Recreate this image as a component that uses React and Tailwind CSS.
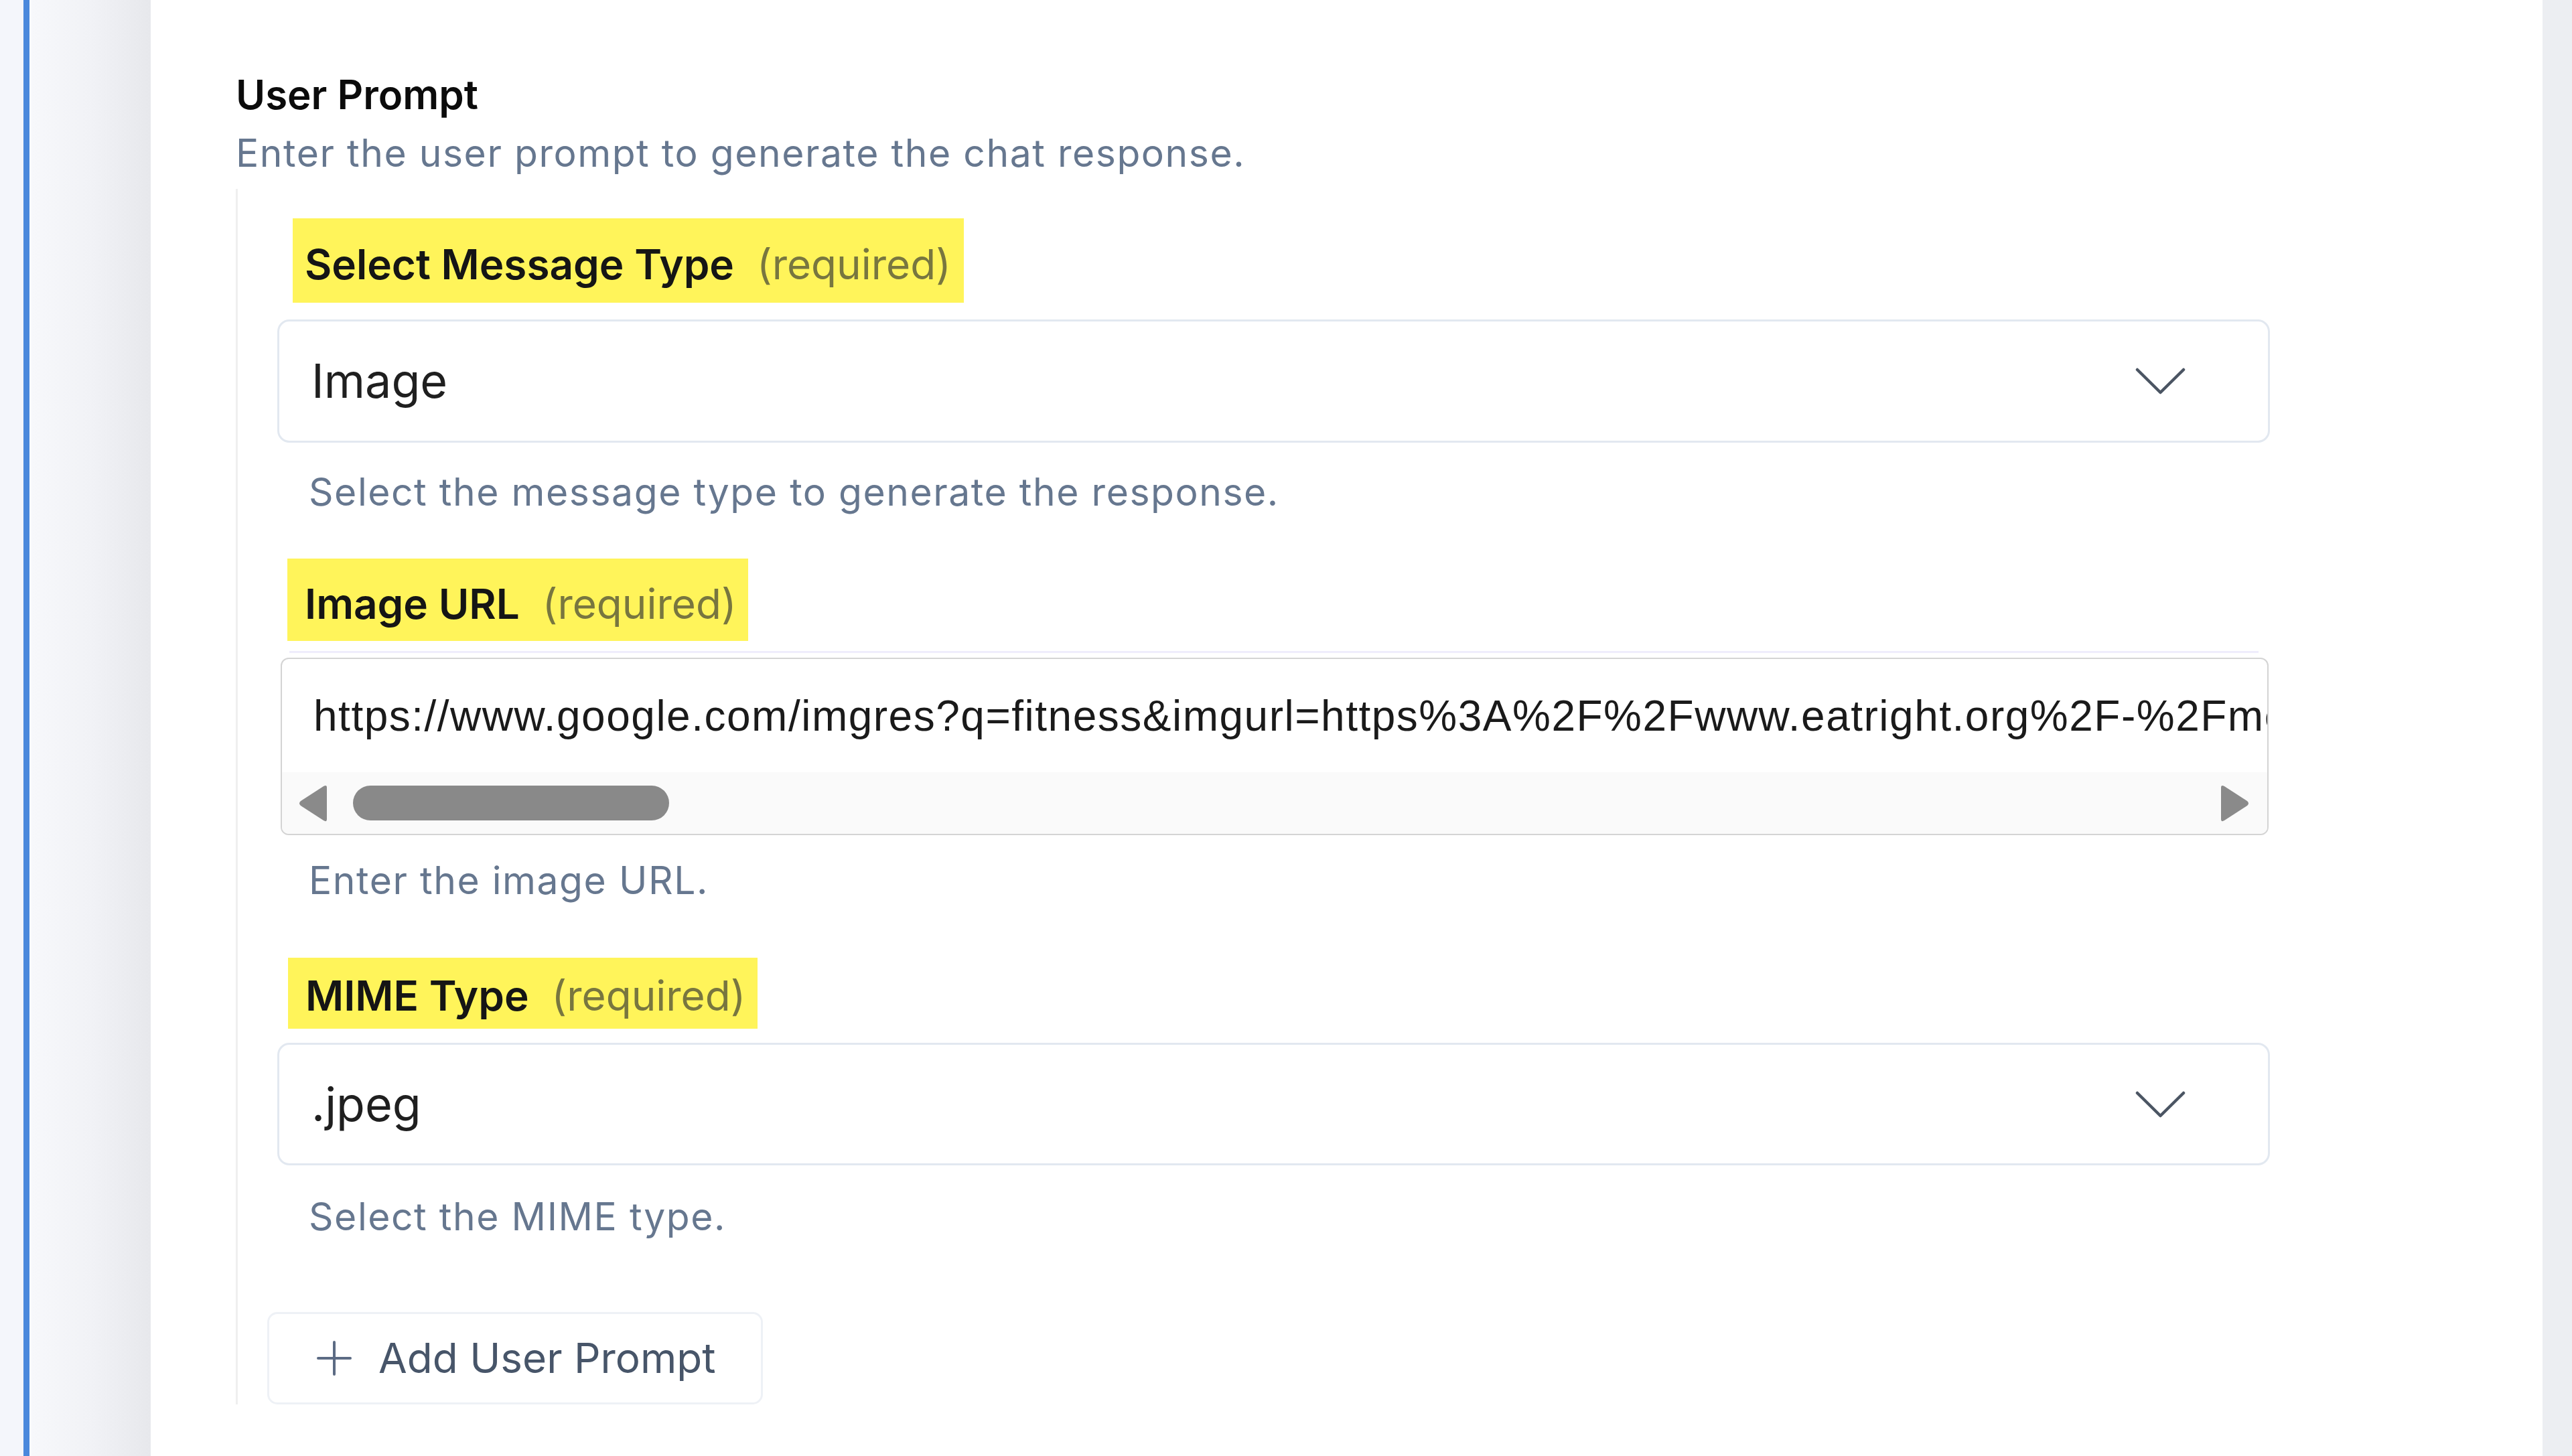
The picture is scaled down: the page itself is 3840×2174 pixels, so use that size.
import React from "react";

function Chevron() {
    return (
        <svg className="w-[75px] h-[40px]" viewBox="0 0 75 40" fill="none">
            <polyline
                points="3,3 37.5,37 72,3"
                stroke="#4b5563"
                strokeWidth="4.5"
                strokeLinecap="round"
                strokeLinejoin="round"
            />
        </svg>
    );
}

function Label({ text, className }) {
    return (
        <div className={`flex w-fit items-center bg-[#fff45a] ${className}`}>
            <span className="text-[62px] leading-none font-semibold text-[#151515]">{text}</span>
            <span className="ml-[34px] text-[62px] leading-none text-[#78763f]">(required)</span>
        </div>
    );
}

function Select({ value, className }) {
    return (
        <div
            className={`ml-[59px] flex w-[2975px] items-center justify-between rounded-[18px] border-[3px] border-[#e2e8f0] bg-white pl-[48px] pr-[123px] ${className}`}
        >
            <span className="text-[70px] leading-none text-[#1f1f1f]">{value}</span>
            <Chevron />
        </div>
    );
}

function Helper({ children, className }) {
    return (
        <p className={`ml-[106px] text-[57px] leading-[56px] tracking-[0.027em] text-[#66778f] ${className}`}>
            {children}
        </p>
    );
}

export default function App() {
    const url =
        "https://www.google.com/imgres?q=fitness&imgurl=https%3A%2F%2Fwww.eatright.org%2F-%2Fmedia%2Fimages%2Featright-landing-pages%2Ffitnesslp_804x482.jpg";

    return (
        <div className="flex h-[2174px] w-full overflow-hidden bg-white font-['Inter',sans-serif]">
            {/* left rail */}
            <div className="flex w-[225px] shrink-0">
                <div className="w-[35px] bg-[#f4f6fb]" />
                <div className="w-[9px] bg-[#4a88dc]" />
                <div className="w-[4px] bg-[#f8f9fc]" />
                <div className="flex-1 bg-gradient-to-r from-[#f7f8fb] via-[#f1f2f6] to-[#e7e8ec]" />
            </div>

            <main className="flex-1 pl-[127px] pt-[111px]">
                <h2 className="text-[60px] leading-[60px] font-semibold text-[#0b0b0b]">User Prompt</h2>
                <p className="mt-[30px] text-[57px] leading-[56px] tracking-[0.027em] text-[#66778f]">
                    Enter the user prompt to generate the chat response.
                </p>

                <div className="mt-[25px] flex flex-col border-l-[3px] border-[#efefef] pt-[44px]">
                    {/* message type */}
                    <Label text="Select Message Type" className="ml-[82px] h-[126px] pl-[18px] pr-[19px] pt-[12px]" />
                    <Select value="Image" className="mt-[25px] h-[184px]" />
                    <Helper className="mt-[46px]">Select the message type to generate the response.</Helper>

                    {/* image url */}
                    <Label text="Image URL" className="ml-[74px] mt-[71px] h-[123px] pl-[26px] pr-[17px] pt-[12px]" />
                    <div className="ml-[77px] mt-[15px] h-[3px] w-[2940px] bg-[#efedfc]" />
                    <div className="ml-[64px] mt-[7px] flex h-[265px] w-[2968px] flex-col overflow-hidden rounded-[12px] border-2 border-[#d4d4d4]">
                        <div className="flex flex-1 items-center overflow-hidden pl-[47px]">
                            <span className="whitespace-nowrap font-['Liberation_Sans',Arial,sans-serif] text-[64px] leading-none tracking-[1.5px] text-[#1a1a1a]">
                                {url}
                            </span>
                        </div>
                        <div className="flex h-[92px] items-center bg-[#fafafa] pl-[24px] pr-[26px]">
                            <svg className="w-[43px] h-[55px]" viewBox="0 0 43 55">
                                <path d="M43 4 L43 51 Q43 56 38 53 L4 31 Q0 27.5 4 24 L38 2 Q43 -1 43 4 Z" fill="#8a8a8a" />
                            </svg>
                            <div className="ml-[39px] h-[52px] w-[472px] rounded-full bg-[#898989]" />
                            <div className="flex-1" />
                            <svg className="w-[43px] h-[55px]" viewBox="0 0 43 55">
                                <path d="M0 4 L0 51 Q0 56 5 53 L39 31 Q43 27.5 39 24 L5 2 Q0 -1 0 4 Z" fill="#8a8a8a" />
                            </svg>
                        </div>
                    </div>
                    <Helper className="mt-[40px]">Enter the image URL.</Helper>

                    {/* mime type */}
                    <Label text="MIME Type" className="ml-[75px] mt-[87px] h-[106px] pl-[26px] pr-[18px] pt-[8px]" />
                    <Select value=".jpeg" className="mt-[21px] h-[183px]" />
                    <Helper className="mt-[49px]">Select the MIME type.</Helper>

                    <button className="ml-[44px] mt-[114px] flex h-[138px] w-[740px] items-center rounded-[15px] border-[3px] border-[#eef1f6] bg-white pl-[71px]">
                        <svg className="w-[52px] h-[52px]" viewBox="0 0 52 52">
                            <path d="M26 2 V50 M2 26 H50" stroke="#5c6b84" strokeWidth="4" strokeLinecap="round" />
                        </svg>
                        <span className="ml-[40px] text-[62px] leading-none text-[#475569]">Add User Prompt</span>
                    </button>
                </div>
            </main>

            <div className="w-[44px] shrink-0 bg-[#eceef2]" />
        </div>
    );
}
